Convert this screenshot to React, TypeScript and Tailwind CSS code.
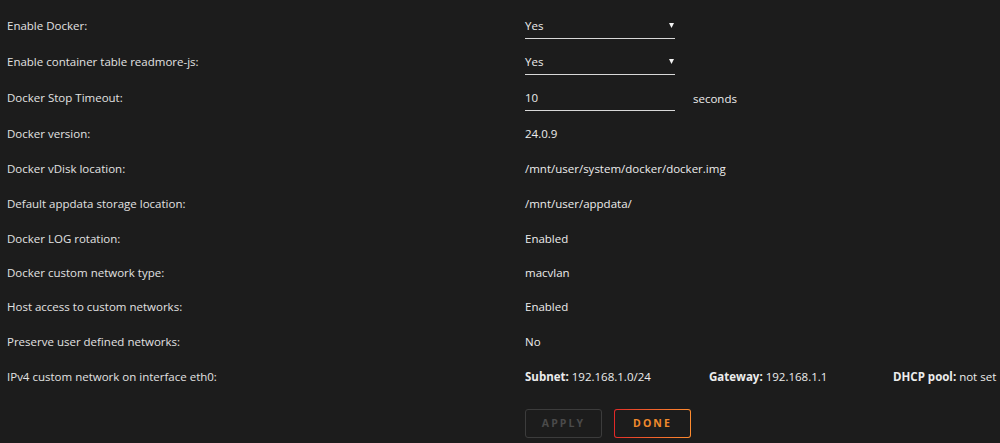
import React from "react";

const FONT = { fontFamily: '"Open Sans", "Noto Sans", sans-serif' };

type Row = { label: string; value: React.ReactNode; h: string };

function Select({ value }: { value: string }) {
  return (
    <div className="relative w-[150px] h-[25px] border-b border-[#d8d8d8] flex items-center pt-[1px]">
      <span className="text-[11.5px] text-[#ececec]">{value}</span>
      <svg className="absolute right-[1px] top-[9px]" width="5" height="5" viewBox="0 0 5 5">
        <polygon points="0,0 5,0 2.5,5" fill="#f2f2f2" />
      </svg>
    </div>
  );
}

const ROWS: Row[] = [
  { label: "Enable Docker:", value: <Select value="Yes" />, h: "h-[36px]" },
  { label: "Enable container table readmore-js:", value: <Select value="Yes" />, h: "h-[36px]" },
  {
    label: "Docker Stop Timeout:",
    value: (
      <div className="flex items-center gap-[18px]">
        <div className="w-[150px] h-[25px] pt-[1px] border-b border-[#d8d8d8] flex items-center text-[11.5px] text-[#ececec]">
          10
        </div>
        <span className="pt-[2px]">seconds</span>
      </div>
    ),
    h: "h-[36px]",
  },
  { label: "Docker version:", value: "24.0.9", h: "h-[35px]" },
  { label: "Docker vDisk location:", value: "/mnt/user/system/docker/docker.img", h: "h-[35px]" },
  { label: "Default appdata storage location:", value: "/mnt/user/appdata/", h: "h-[35px]" },
  { label: "Docker LOG rotation:", value: "Enabled", h: "h-[35px]" },
  { label: "Docker custom network type:", value: "macvlan", h: "h-[34px]" },
  { label: "Host access to custom networks:", value: "Enabled", h: "h-[34px]" },
  { label: "Preserve user defined networks:", value: "No", h: "h-[35px]" },
  {
    label: "IPv4 custom network on interface eth0:",
    value: (
      <div className="flex whitespace-nowrap">
        <span className="w-[184px]">
          <b className="font-bold">Subnet:</b> 192.168.1.0/24
        </span>
        <span className="w-[184px]">
          <b className="font-bold">Gateway:</b> 192.168.1.1
        </span>
        <span>
          <b className="font-bold">DHCP pool:</b> not set
        </span>
      </div>
    ),
    h: "h-[35px]",
  },
];

export default function App() {
  return (
    <div className="w-[1000px] h-[443px] bg-[#1c1c1c] text-[#e2e2e2] overflow-hidden pt-[8px]" style={FONT}>
      {ROWS.map((r) => (
        <div key={r.label} className={`flex items-center ${r.h}`}>
          <div className="w-[525px] pl-[7px] text-[11.5px] whitespace-nowrap">{r.label}</div>
          <div className="text-[11.5px] text-[#ececec] whitespace-nowrap">{r.value}</div>
        </div>
      ))}
      <div className="flex gap-[12px] pl-[525px] mt-[15px]">
        <button className="w-[77px] h-[29px] rounded-[3px] border border-[#3c3c3c] text-[10.5px] font-bold tracking-[0.2em] text-[#4a4a4a]">
          APPLY
        </button>
        <div className="w-[77px] h-[29px] rounded-[3px] p-[1px] bg-gradient-to-r from-[#e22828] to-[#ff8c2f]">
          <div className="w-full h-full rounded-[2px] bg-[#1c1c1c] flex items-center justify-center text-[10.5px] font-bold tracking-[0.2em] text-[#f08a2c]">
            DONE
          </div>
        </div>
      </div>
    </div>
  );
}
